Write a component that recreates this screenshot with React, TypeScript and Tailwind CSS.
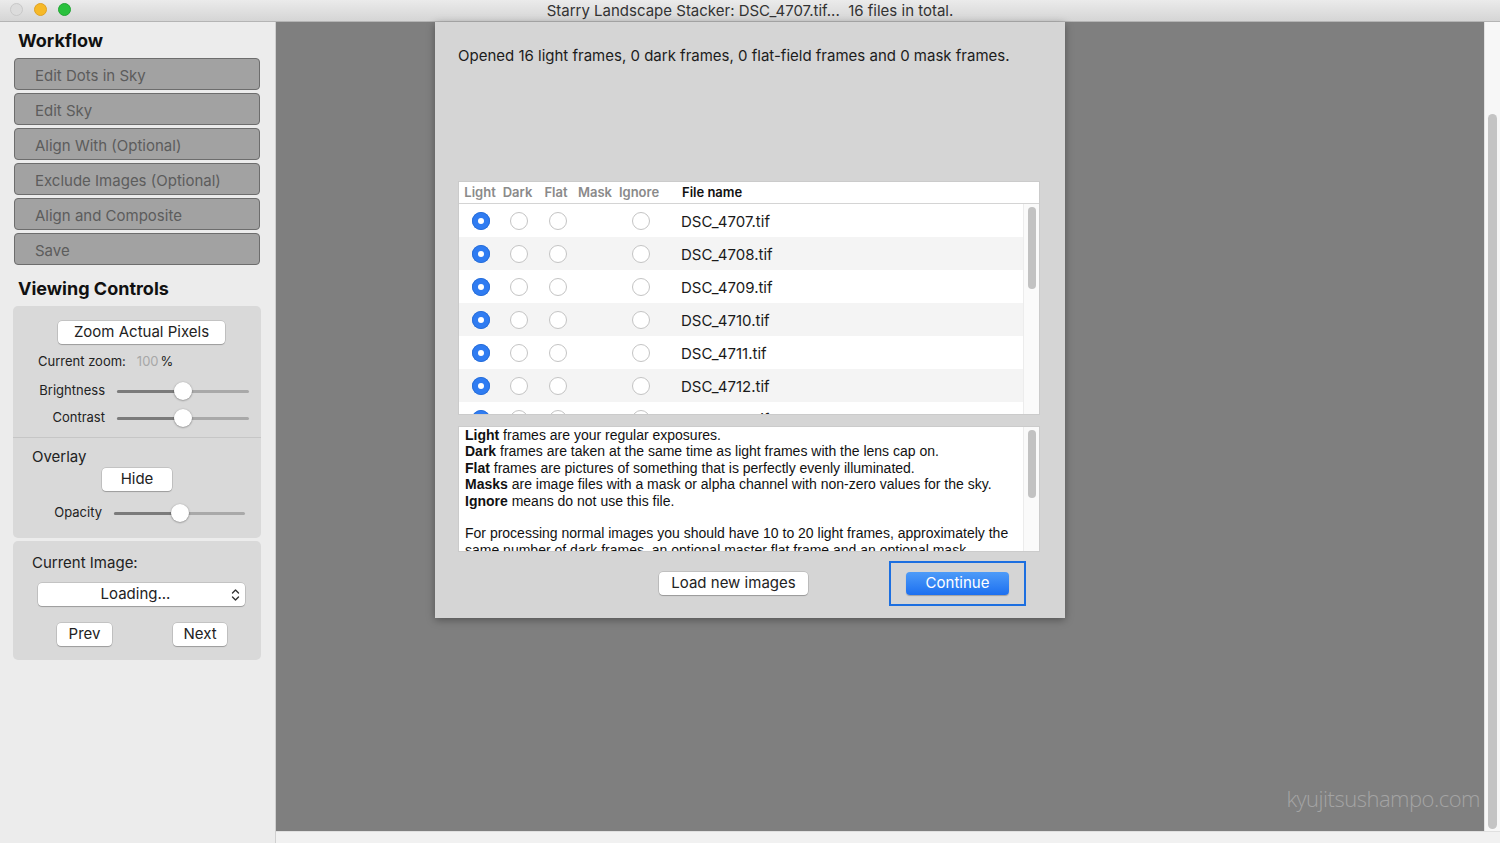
import React from 'react';

const files = ['DSC_4707.tif', 'DSC_4708.tif', 'DSC_4709.tif', 'DSC_4710.tif', 'DSC_4711.tif', 'DSC_4712.tif', 'DSC_4713.tif'];

const workflow = ['Edit Dots in Sky', 'Edit Sky', 'Align With (Optional)', 'Exclude Images (Optional)', 'Align and Composite', 'Save'];

const Radio = ({ on }: { on?: boolean }) =>
  on ? (
    <span className="w-[18px] h-[18px] rounded-full bg-[#2f7cf2] flex items-center justify-center shadow-[inset_0_0_0_1px_#2a6fd8]">
      <span className="w-[6px] h-[6px] rounded-full bg-white" />
    </span>
  ) : (
    <span className="w-[18px] h-[18px] rounded-full bg-white border border-[#c4c4c4]" />
  );

const Slider = ({ width, pos }: { width: number; pos: number }) => (
  <div className="relative h-[18px] flex items-center" style={{ width }}>
    <div className="w-full h-[3px] rounded-full bg-[#a9a9a9]" />
    <div className="absolute left-0 h-[3px] rounded-full bg-[#7b7b7b]" style={{ width: pos }} />
    <div
      className="absolute w-[18px] h-[18px] rounded-full bg-white shadow-[0_0.5px_2px_rgba(0,0,0,0.45)]"
      style={{ left: pos - 9 }}
    />
  </div>
);

const MacButton = ({ children, className }: { children: React.ReactNode; className?: string }) => (
  <div
    className={`h-[23px] bg-white rounded-[4px] shadow-[0_0_0_0.5px_rgba(0,0,0,0.2),0_1px_1px_rgba(0,0,0,0.2)] flex items-center justify-center text-[15px] text-[#222] ${className || ''}`}
  >
    {children}
  </div>
);

export default function App() {
  return (
    <div className="w-[1500px] h-[843px] flex flex-col overflow-hidden bg-[#ececec] font-['Inter','Liberation_Sans',sans-serif]">
      {/* title bar */}
      <div className="relative h-[22px] shrink-0 bg-gradient-to-b from-[#ebebeb] to-[#d5d5d5] border-b border-[#b4b4b4] flex items-center justify-center">
        <div className="absolute left-[10px] top-[3px] flex gap-[11px]">
          <span className="w-[13px] h-[13px] rounded-full bg-[#dcdcdc] border border-[#c8c8c8]" />
          <span className="w-[13px] h-[13px] rounded-full bg-[#f6b928] border border-[#dfa123]" />
          <span className="w-[13px] h-[13px] rounded-full bg-[#2ac13e] border border-[#23a535]" />
        </div>
        <span className="text-[15px] leading-[18px] text-[#333]">Starry Landscape Stacker: DSC_4707.tif...&nbsp; 16 files in total.</span>
      </div>

      <div className="flex flex-1 min-h-0">
        {/* sidebar */}
        <div className="w-[276px] shrink-0 border-r border-[#cfcfcf] bg-[#ececec] flex flex-col">
          <div className="pl-[18px] pt-[8px] text-[18px] font-bold text-[#111] leading-[22px]">Workflow</div>
          <div className="mt-[6px] pl-[14px] flex flex-col gap-[3px] w-[260px]">
            {workflow.map((w) => (
              <div
                key={w}
                className="h-[32px] rounded-[4px] bg-[#a2a2a2] border border-[#6d6d6d] flex items-center pl-[20px] pt-[5px] text-[15px] text-[#5c5c5c]"
              >
                {w}
              </div>
            ))}
          </div>
          <div className="pl-[18px] mt-[13px] text-[18px] font-bold text-[#111] leading-[22px]">Viewing Controls</div>

          <div className="ml-[13px] mt-[6px] w-[248px] flex flex-col">
            <div className="bg-[#d9d9d9] rounded-t-[5px] pt-[15px] pb-[8px] flex flex-col">
              <MacButton className="ml-[45px] w-[167px]">Zoom Actual Pixels</MacButton>
              <div className="mt-[11px] ml-[25px] text-[13px] text-[#222] flex items-center h-[14px]">
                Current zoom:<span className="ml-[11px] text-[#a7a7a7]">100</span>
                <span className="ml-[2px]">%</span>
              </div>
              <div className="mt-[11px] flex items-center h-[22px]">
                <span className="w-[92px] text-right text-[13px] text-[#222]">Brightness</span>
                <div className="ml-[12px]">
                  <Slider width={132} pos={66} />
                </div>
              </div>
              <div className="mt-[5px] flex items-center h-[22px]">
                <span className="w-[92px] text-right text-[13px] text-[#222]">Contrast</span>
                <div className="ml-[12px]">
                  <Slider width={132} pos={66} />
                </div>
              </div>
            </div>
            <div className="h-px bg-[#c6c6c6]" />
            <div className="bg-[#d9d9d9] rounded-b-[5px] pt-[10px] pb-[14px] flex flex-col">
              <div className="ml-[19px] text-[15px] text-[#222] leading-[18px]">Overlay</div>
              <MacButton className="ml-[89px] w-[70px] mt-[2px]">Hide</MacButton>
              <div className="mt-[11px] flex items-center h-[22px]">
                <span className="w-[89px] text-right text-[13px] text-[#222]">Opacity</span>
                <div className="ml-[12px]">
                  <Slider width={131} pos={66} />
                </div>
              </div>
            </div>

            <div className="mt-[3px] bg-[#d9d9d9] rounded-[5px] pt-[13px] pb-[14px] flex flex-col">
              <div className="ml-[19px] text-[15px] text-[#222] leading-[18px]">Current Image:</div>
              <div className="ml-[25px] mt-[11px] w-[207px] h-[23px] pr-[12px] bg-white rounded-[4px] shadow-[0_0_0_0.5px_rgba(0,0,0,0.2),0_1px_1px_rgba(0,0,0,0.2)] relative flex items-center justify-center text-[15px] text-[#222]">
                Loading...
                <svg className="absolute right-[5px]" width="9" height="14" viewBox="0 0 9 14" fill="none" stroke="#333" strokeWidth="1.4" strokeLinecap="round" strokeLinejoin="round">
                  <path d="M1.5 5 L4.5 2 L7.5 5" />
                  <path d="M1.5 9 L4.5 12 L7.5 9" />
                </svg>
              </div>
              <div className="mt-[17px] flex">
                <MacButton className="ml-[44px] w-[55px]">Prev</MacButton>
                <MacButton className="ml-[61px] w-[54px]">Next</MacButton>
              </div>
            </div>
          </div>
          <div className="flex-1" />
        </div>

        {/* main */}
        <div className="flex-1 flex flex-col min-w-0">
          <div className="flex flex-1 min-h-0">
            <div className="relative flex-1 bg-[#7f7f7f] pl-[159px]">
              <div className="w-[630px] h-[596px] bg-[#d5d5d5] shadow-[0_2px_8px_rgba(0,0,0,0.35)] flex flex-col">
                <div className="pl-[23px] pt-[24px] text-[15px] text-[#1c1c1c] leading-[20px]">
                  Opened 16 light frames, 0 dark frames, 0 flat-field frames and 0 mask frames.
                </div>

                {/* table */}
                <div className="ml-[23px] mt-[115px] w-[582px] h-[234px] bg-white border border-[#cbcbcb] flex flex-col overflow-hidden">
                  <div className="h-[22px] shrink-0 flex items-center border-b border-[#d4d4d4] text-[13px] font-semibold text-[#8a8a8a]">
                    <span className="w-[42px] text-center">Light</span>
                    <span className="w-[33px] text-center">Dark</span>
                    <span className="w-[44px] text-center">Flat</span>
                    <span className="w-[34px] text-center">Mask</span>
                    <span className="w-[54px] text-center">Ignore</span>
                    <span className="pl-[16px] text-[#111]">File name</span>
                  </div>
                  <div className="flex flex-1 min-h-0">
                    <div className="flex-1 flex flex-col overflow-hidden">
                      {files.map((f, i) => (
                        <div
                          key={f}
                          className={`h-[33px] shrink-0 flex items-center ${i % 2 === 1 ? 'bg-[#f4f4f4]' : 'bg-white'}`}
                        >
                          <span className="w-[43px] flex justify-center">
                            <Radio on />
                          </span>
                          <span className="w-[33px] flex justify-center">
                            <Radio />
                          </span>
                          <span className="w-[45px] flex justify-center">
                            <Radio />
                          </span>
                          <span className="w-[34px]" />
                          <span className="w-[54px] flex justify-center">
                            <Radio />
                          </span>
                          <span className="pl-[13px] pt-[3px] text-[15px] text-[#1a1a1a]">{f}</span>
                        </div>
                      ))}
                    </div>
                    <div className="w-[16px] shrink-0 bg-[#fafafa] border-l border-[#ececec] pt-[3px] flex justify-center">
                      <div className="w-[8px] h-[82px] rounded-full bg-[#c2c2c2]" />
                    </div>
                  </div>
                </div>

                {/* description */}
                <div className="ml-[23px] mt-[11px] w-[582px] h-[126px] bg-white border border-[#cbcbcb] flex overflow-hidden">
                  <div className="flex-1 pl-[6px] text-[14px] leading-[16.4px] text-[#111] font-['Liberation_Sans',sans-serif]">
                    <p><b>Light</b> frames are your regular exposures.</p>
                    <p><b>Dark</b> frames are taken at the same time as light frames with the lens cap on.</p>
                    <p><b>Flat</b> frames are pictures of something that is perfectly evenly illuminated.</p>
                    <p><b>Masks</b> are image files with a mask or alpha channel with non-zero values for the sky.</p>
                    <p><b>Ignore</b> means do not use this file.</p>
                    <p className="h-[16.4px]" />
                    <p>
                      For processing normal images you should have 10 to 20 light frames, approximately the same number of dark frames, an optional master flat frame and an optional mask.
                    </p>
                  </div>
                  <div className="w-[16px] shrink-0 bg-[#fafafa] border-l border-[#ececec] pt-[3px] flex justify-center">
                    <div className="w-[8px] h-[68px] rounded-full bg-[#c2c2c2]" />
                  </div>
                </div>

                {/* buttons */}
                <div className="mt-[9px] flex items-center">
                  <MacButton className="ml-[224px] w-[149px]">Load new images</MacButton>
                  <div className="ml-[81px] w-[137px] h-[45px] border-2 border-[#1c6fe0] flex items-center justify-center">
                    <div className="w-[103px] h-[23px] rounded-[4px] bg-gradient-to-b from-[#4d9bf8] to-[#1b6ff0] shadow-[0_1px_1px_rgba(0,0,0,0.25)] flex items-center justify-center text-[15px] text-white">
                      Continue
                    </div>
                  </div>
                </div>
              </div>

              <span className="absolute right-[4px] bottom-[16px] text-[22px] font-light tracking-[-0.5px] text-[#a4a4a4] font-['Open_Sans',sans-serif]">
                kyujitsushampo.com
              </span>
            </div>
            <div className="w-[16px] shrink-0 bg-[#f7f7f7] border-l border-[#e2e2e2] pt-[92px] pb-[2px] flex justify-center">
              <div className="w-[9px] h-[715px] rounded-full bg-[#c4c4c4]" />
            </div>
          </div>
          <div className="h-[12px] shrink-0 bg-[#f1f1f1] border-t border-[#e0e0e0]" />
        </div>
      </div>
    </div>
  );
}
